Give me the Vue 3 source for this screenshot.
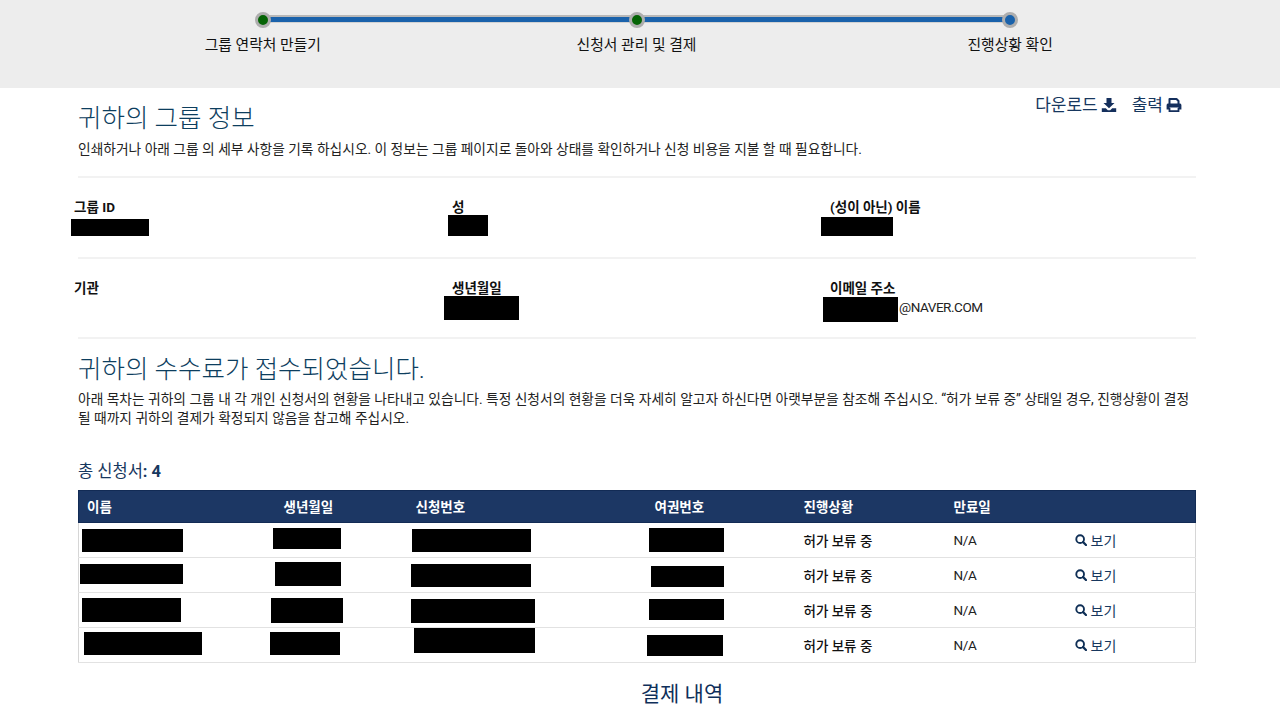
<script setup>
const steps = [
  { label: '그룹 연락처 만들기', done: true },
  { label: '신청서 관리 및 결제', done: true },
  { label: '진행상황 확인', done: false }
]
const columns = ['이름', '생년월일', '신청번호', '여권번호', '진행상황', '만료일', '']
const rows = [1, 2, 3, 4]
const redactions = [
  [71, 219, 78, 17], [448, 215, 40, 21], [821, 217, 72, 19],
  [444, 296, 75, 24], [823, 297, 75, 25],
  [82, 529, 101, 23], [273, 528, 68, 21], [412, 529, 119, 23], [649, 528, 75, 24],
  [80, 564, 103, 20], [275, 562, 66, 24], [411, 564, 120, 23], [651, 566, 73, 21],
  [82, 598, 99, 24], [271, 598, 72, 25], [411, 599, 124, 24], [649, 599, 75, 21],
  [84, 632, 118, 23], [270, 632, 70, 23], [414, 628, 121, 25], [647, 635, 76, 21]
]
const boxStyle = (r) => ({ left: r[0] + 'px', top: r[1] + 'px', width: r[2] + 'px', height: r[3] + 'px' })
</script>

<template>
  <div class="page">
    <header class="progress">
      <div class="steps">
        <div v-for="(s, i) in steps" :key="s.label" class="step">
          <div class="track">
            <span v-if="i < 2" class="bar"></span>
            <span class="dot" :class="{ done: s.done }"></span>
          </div>
          <div class="step-label">{{ s.label }}</div>
        </div>
      </div>
    </header>

    <main class="content">
      <div class="actions">
        <a class="action">다운로드
          <svg class="ico" viewBox="0 0 16 16" width="16" height="16"><path fill="#142f5c" d="M5.500 1h5v5h3L8 11.200 2.500 6h3zM.8 11.200h4l2 2h2.400l2-2h4V15H.8z"/></svg>
        </a>
        <a class="action">출력
          <svg class="ico" viewBox="0 0 16 16" width="16" height="16"><path fill="none" stroke="#142f5c" stroke-width="2" stroke-linejoin="round" d="M3.500 7.500V2h7l2 2v3.500"/><path fill="none" stroke="#142f5c" stroke-width="1.800" d="M3.500 11v3.100h9V11"/><path fill="#142f5c" d="M2.300 6.500h11.400c.9 0 1.700.7 1.700 1.600V12.500h-3V10.500H3.600v2h-3V8.100c0-.9.800-1.600 1.700-1.600z"/></svg>
        </a>
      </div>

      <h1 class="title first">귀하의 그룹 정보</h1>
      <p class="desc">인쇄하거나 아래 그룹 의 세부 사항을 기록 하십시오. 이 정보는 그룹 페이지로 돌아와 상태를 확인하거나 신청 비용을 지불 할 때 필요합니다.</p>

      <section class="info">
        <div class="info-row">
          <div class="field"><b class="nudge-a">그룹 ID</b></div>
          <div class="field"><b>성</b></div>
          <div class="field"><b>(성이 아닌) 이름</b></div>
        </div>
        <div class="info-row">
          <div class="field"><b class="nudge-a">기관</b></div>
          <div class="field"><b>생년월일</b></div>
          <div class="field"><b>이메일 주소</b><span class="email">@NAVER.COM</span></div>
        </div>
      </section>

      <h1 class="title second">귀하의 수수료가 접수되었습니다.</h1>
      <p class="desc wrap">아래 목차는 귀하의 그룹 내 각 개인 신청서의 현황을 나타내고 있습니다. 특정 신청서의 현황을 더욱 자세히 알고자 하신다면 아랫부분을 참조해 주십시오. “허가 보류 중” 상태일 경우, 진행상황이 결정될 때까지 귀하의 결제가 확정되지 않음을 참고해 주십시오.</p>

      <div class="total">총 신청서<b>: 4</b></div>

      <table class="grid">
        <colgroup>
          <col class="c1"><col class="c2"><col class="c3"><col class="c4"><col class="c5"><col class="c6"><col>
        </colgroup>
        <thead>
          <tr><th v-for="c in columns" :key="c">{{ c }}</th></tr>
        </thead>
        <tbody>
          <tr v-for="r in rows" :key="r">
            <td></td><td></td><td></td><td></td>
            <td class="status">허가 보류 중</td>
            <td class="na">N/A</td>
            <td>
              <a class="view">
                <svg viewBox="0 0 14 14" width="12" height="12"><circle cx="6" cy="6" r="4.500" fill="none" stroke="#0f2f56" stroke-width="2.200"/><path d="M9.500 9.500l3.300 3.300" stroke="#0f2f56" stroke-width="2.600" stroke-linecap="round"/></svg>
                보기
              </a>
            </td>
          </tr>
        </tbody>
      </table>

      <h2 class="payment">결제 내역</h2>
    </main>

    <i v-for="(r, i) in redactions" :key="i" class="redact" :style="boxStyle(r)"></i>
  </div>
</template>

<style>
html, body { margin: 0; overflow: hidden; background: #fff; }
</style>

<style scoped>
.page {
  position: relative;
  height: 718px;
  overflow: hidden;
  font-family: Roboto, "Noto Sans CJK KR", sans-serif;
  color: #1a1a1a;
}
.progress { height: 88px; background: #ededed; }
.steps { display: flex; margin-left: 76px; width: 1121px; }
.step { flex: 1; text-align: center; }
.track { position: relative; height: 37px; }
.bar {
  position: absolute; left: 50%; top: 15px; width: 100%; height: 5px;
  background: #1a62ab; border-top: 2px solid #b8b8b8; border-bottom: 1px solid #d2d2d2;
}
.dot {
  position: absolute; left: 50%; top: 12px; width: 10px; height: 10px; margin-left: -8px;
  border: 3px solid #aeaeae; border-radius: 50%; background: #1a62ab;
}
.dot.done { background: #056405; }
.step-label { font-size: 14.800px; line-height: 16px; color: #111; }

.content { position: relative; margin-left: 78px; width: 1118px; }
.actions {
  position: absolute; right: 14px; top: 7px;
  display: flex; gap: 15px; font-size: 17px; line-height: 20px; color: #17375e;
}
.action { display: flex; align-items: center; gap: 3px; }
.ico { display: block; }
.title { margin: 0; font-weight: 300; font-size: 25.500px; line-height: 32px; color: #0d3e5e; }
.title.first { padding-top: 14px; }
.desc { margin: 0; font-size: 13.750px; line-height: 19px; color: #222; }
.first + .desc { margin-top: 5.500px; }
.info { margin-top: 17px; }
.info-row {
  display: grid; grid-template-columns: 374px 378px 1fr;
  height: 79px; border-top: 2px solid #f2f2f2;
}
.info-row + .info-row { height: 78px; }
.field { padding-top: 20px; font-size: 13.500px; line-height: 18px; color: #111; }
.field b { display: block; font-weight: 700; }
.nudge-a { margin-left: -4px; }
.email { display: block; margin: 1px 0 0 69px; font-size: 13.500px; letter-spacing: -.45px; line-height: 18px; color: #222; }
.second { border-top: 2px solid #f2f2f2; padding-top: 14px; }
.wrap { margin-top: 5px; }
.total { margin-top: 34px; font-size: 16.500px; line-height: 20px; color: #17375e; }
.total b { font-weight: 700; }
.grid {
  width: 1118px; margin-top: 8px; table-layout: fixed; border-collapse: collapse;
  font-size: 13px; border: 1px solid #d6d6d6;
}
.c1 { width: 197px; } .c2 { width: 132px; } .c3 { width: 239px; }
.c4 { width: 149px; } .c5 { width: 150px; } .c6 { width: 122px; }
th {
  height: 31px; padding: 0 8px; text-align: left; background: #1c3764; color: #fff;
  font-weight: 700; font-size: 13.500px; border-top: 1px solid #122b55; border-bottom: 1px solid #122b55;
}
th:first-child { border-left: 1px solid #122b55; }
th:last-child { border-right: 1px solid #122b55; }
td { height: 34px; padding: 0 8px; border-bottom: 1px solid #e2e2e2; color: #222; }
.na { font-size: 13.500px; letter-spacing: -.3px; }
.status { font-weight: 500; font-size: 13.500px; color: #111; }
.view { display: flex; align-items: center; gap: 4px; margin-left: -1px; font-size: 14px; color: #17375e; }
.payment {
  margin: 18px 0 0; padding-left: 90px; text-align: center;
  font-weight: 400; font-size: 21px; line-height: 26px; color: #0f2f5a;
}
.redact { position: absolute; background: #000; }
</style>
